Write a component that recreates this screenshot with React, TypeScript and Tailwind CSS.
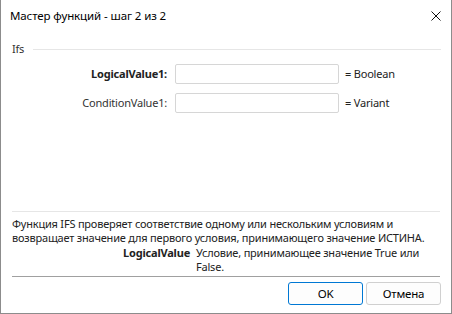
const font = { fontFamily: '"Noto Sans", "Open Sans", sans-serif' };

function ParamRow({ label, type, bold }: { label: string; type: string; bold?: boolean }) {
  return (
    <div className="flex h-[20px] items-center">
      <div
        className={`w-[166px] shrink-0 text-right ${bold ? "font-bold text-[#222]" : "text-[#333]"}`}
      >
        {label}
      </div>
      <div className="ml-[8px] h-[20px] w-[164px] shrink-0 rounded-[2px] border border-[#d6d6d6] bg-white" />
      <div className="ml-[6px] text-[#222]">{type}</div>
    </div>
  );
}

export default function App() {
  return (
    <div
      className="flex h-[314px] w-[452px] flex-col border-x border-b border-[#8c8c8c] bg-white text-[11px] leading-[14px] tracking-[-0.2px] text-black"
      style={font}
    >
      {/* title bar */}
      <div className="flex h-[32px] shrink-0 items-center justify-between pl-[9px] pr-[10px]">
        <span className="text-[11.5px] tracking-[-0.1px] text-black">Мастер функций - шаг 2 из 2</span>
        <svg width="10" height="10" viewBox="0 0 10 10" className="mt-[-1px]">
          <path d="M0.5 0.5 L9.5 9.5 M9.5 0.5 L0.5 9.5" stroke="#111" strokeWidth="1" fill="none" />
        </svg>
      </div>

      {/* group */}
      <div className="mt-[12px] flex h-[10px] items-center pl-[11px] pr-[10px] text-[#333]">
        <span>Ifs</span>
        <div className="ml-[9px] h-px flex-1 bg-[#e6e6e6]" />
      </div>

      <div className="mt-[10px] flex flex-col gap-[9px]">
        <ParamRow label="LogicalValue1:" type="= Boolean" bold />
        <ParamRow label="ConditionValue1:" type="= Variant" />
      </div>

      <div className="flex-1" />

      {/* description */}
      <div className="mx-[11px] h-px bg-[#e6e6e6]" />
      <div className="px-[11px] pt-[5px] text-[#222]">
        <p className="whitespace-nowrap">Функция IFS проверяет соответствие одному или нескольким условиям и</p>
        <p className="whitespace-nowrap">возвращает значение для первого условия, принимающего значение ИСТИНА.</p>
        <div className="mt-[1px] flex">
          <div className="w-[184px] shrink-0 pr-[6px] text-right font-bold">LogicalValue</div>
          <div className="w-[240px]">Условие, принимающее значение True или False.</div>
        </div>
      </div>

      <div className="mx-[11px] mt-[2px] h-px bg-[#a0a0a0]" />

      {/* buttons */}
      <div className="flex h-[36px] shrink-0 items-start justify-end gap-[3px] pr-[10px] pt-[5px]">
        <button className="h-[23px] w-[75px] rounded-[3px] border border-[#0078d4] bg-[#fdfdfd] text-[11.5px] text-black">
          OK
        </button>
        <button className="h-[23px] w-[75px] rounded-[3px] border border-[#d0d0d0] bg-[#fdfdfd] text-[11.5px] text-black">
          Отмена
        </button>
      </div>
    </div>
  );
}
